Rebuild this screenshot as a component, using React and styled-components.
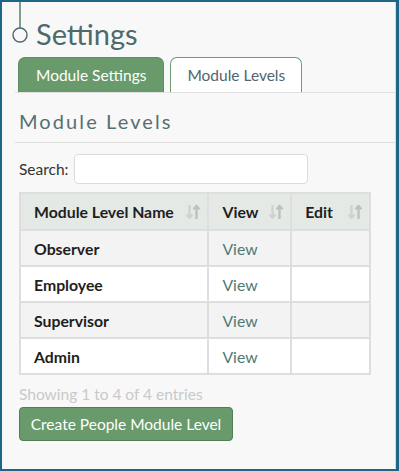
import React from "react";
import styled, { createGlobalStyle } from "styled-components";

const Global = createGlobalStyle`
  html, body { margin: 0; padding: 0; background: #f8f8f8; }
  body { font-family: Lato, "Noto Sans", sans-serif; }
  * { box-sizing: border-box; }
`;

const Frame = styled.div`
  width: 399px;
  height: 471px;
  border: 2px solid #1d6688;
  border-right-width: 3px;
  box-shadow: inset -1px 0 0 #dcdcdc;
  background: #f8f8f8;
  padding: 0 25px 0 17px;
  overflow: hidden;
`;

const Header = styled.div`
  display: flex;
  align-items: flex-start;
  gap: 8px;
  height: 55px;
  margin-left: -7px;
`;

const Title = styled.h1`
  margin: 14px 0 0;
  font-size: 29px;
  font-weight: 400;
  line-height: 36px;
  color: #4d6969;
`;

const TabBar = styled.div`
  display: flex;
  gap: 6px;
  margin: 0 -25px 0 -4px;
  padding-left: 3px;
  border-bottom: 1px solid #e0e0e0;
  height: 36px;
`;

const Tab = styled.div`
  height: 35px;
  padding: 0 ${(p) => (p.$active ? 17 : 16)}px;
  display: flex;
  align-items: center;
  font-size: 15.5px;
  border-radius: 7px 7px 0 0;
  border: 1px solid ${(p) => (p.$active ? "#5e8c62" : "#6f9a72")};
  border-bottom: none;
  background: ${(p) => (p.$active ? "#689a6c" : "#ffffff")};
  color: ${(p) => (p.$active ? "#ffffff" : "#4f6570")};
`;

const SectionHead = styled.h2`
  margin: 0 -25px 0 -4px;
  padding: 16px 0 0 4px;
  height: 50px;
  border-bottom: 1px solid #dedede;
  font-size: 20px;
  font-weight: 400;
  letter-spacing: 2.1px;
  color: #557070;
  line-height: 24px;
`;

const SearchRow = styled.label`
  display: flex;
  align-items: center;
  gap: 5px;
  margin-top: 11px;
  font-size: 15.5px;
  color: #333;
`;

const SearchInput = styled.input`
  width: 234px;
  height: 30px;
  border: 1px solid #dcdcdc;
  border-radius: 4px;
  background: #fff;
  outline: none;
`;

const Table = styled.table`
  margin-top: 8px;
  width: 352px;
  border-collapse: collapse;
  border: 2px solid #dedede;
  font-size: 15.8px;
`;

const Th = styled.th`
  height: 37px;
  padding: 0 6px 0 13px;
  text-align: left;
  font-weight: 700;
  color: #1e1e1e;
  background: #e4e9e5;
  border: 2px solid #dedede;
  width: ${(p) => p.$w}px;
`;

const ThInner = styled.div`
  display: flex;
  align-items: center;
  justify-content: space-between;
`;

const Tr = styled.tr`
  background: ${(p) => (p.$odd ? "#f3f3f3" : "#ffffff")};
`;

const Td = styled.td`
  height: 36px;
  padding: 0 13px;
  border: 2px solid #dedede;
  font-weight: ${(p) => (p.$bold ? 700 : 400)};
  color: ${(p) => (p.$bold ? "#1e1e1e" : "#4f7a72")};
`;

const Info = styled.div`
  margin-top: 9px;
  font-size: 15.5px;
  color: #c9c9c9;
  line-height: 20px;
`;

const Button = styled.button`
  margin-top: 3px;
  width: 214px;
  height: 34px;
  border: 1px solid #537d57;
  border-radius: 4px;
  background: #689a6c;
  color: #fff;
  font-family: inherit;
  font-size: 15.5px;
  padding: 0;
`;

const Marker = () => (
  <svg width="16" height="42" viewBox="0 0 16 42">
    <line x1="8" y1="0" x2="8" y2="26" stroke="#5a8060" strokeWidth="1.5" />
    <circle cx="8" cy="33" r="7" fill="#f8f8f8" stroke="#4d6670" strokeWidth="1.4" />
  </svg>
);

const SortIcon = () => (
  <svg width="16" height="18" viewBox="0 0 16 18">
    <g fill="none" strokeWidth="2.4" strokeLinecap="butt">
      <path d="M4.5 2v13M1.5 11.5L4.5 14.8l3-3.3" stroke="#cfd3cf" />
      <path d="M11.5 16V3M8.5 6.3L11.5 3l3 3.3" stroke="#bcc2bd" />
    </g>
  </svg>
);

const rows = ["Observer", "Employee", "Supervisor", "Admin"];

export default function App() {
  return (
    <>
      <Global />
      <Frame>
        <Header>
          <Marker />
          <Title>Settings</Title>
        </Header>
        <TabBar>
          <Tab $active>Module Settings</Tab>
          <Tab>Module Levels</Tab>
        </TabBar>
        <SectionHead>Module Levels</SectionHead>
        <SearchRow>
          Search:
          <SearchInput type="search" />
        </SearchRow>
        <Table>
          <thead>
            <tr>
              <Th $w={190}>
                <ThInner>
                  Module Level Name <SortIcon />
                </ThInner>
              </Th>
              <Th $w={83}>
                <ThInner>
                  View <SortIcon />
                </ThInner>
              </Th>
              <Th $w={79}>
                <ThInner>
                  Edit <SortIcon />
                </ThInner>
              </Th>
            </tr>
          </thead>
          <tbody>
            {rows.map((r, i) => (
              <Tr key={r} $odd={i % 2 === 0}>
                <Td $bold>{r}</Td>
                <Td>View</Td>
                <Td />
              </Tr>
            ))}
          </tbody>
        </Table>
        <Info>Showing 1 to 4 of 4 entries</Info>
        <Button>Create People Module Level</Button>
      </Frame>
    </>
  );
}
